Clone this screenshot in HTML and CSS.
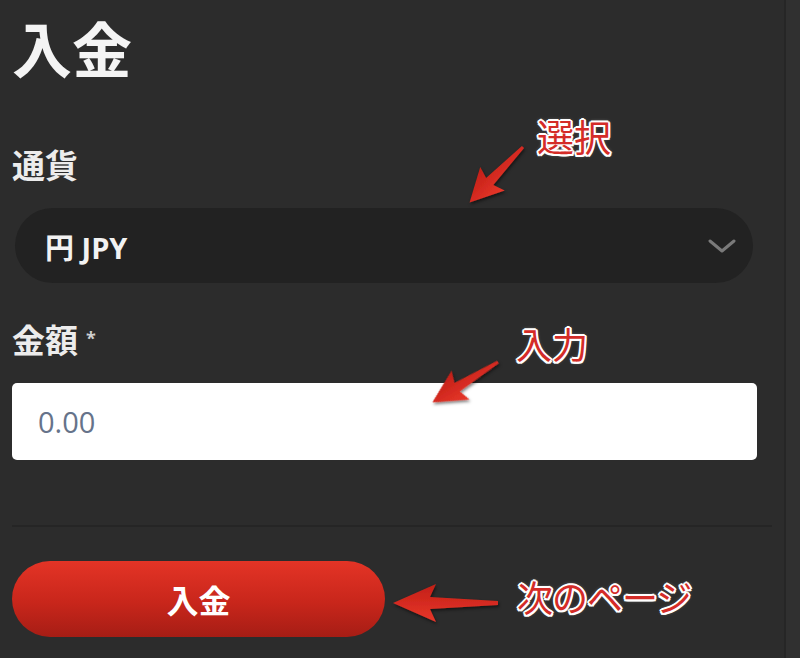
FILE: index.html
```html
<!DOCTYPE html>
<html lang="ja">
<head>
<meta charset="utf-8">
<title>入金</title>
<link rel="stylesheet" href="styles.css">
</head>
<body>
<div class="screen">
  <main class="panel">
    <h1 class="title">入金</h1>
    <div class="label label-currency">通貨</div>
    <div class="select">
      <span class="select-value">円 JPY</span>
      <svg class="chevron" width="28" height="14" viewBox="0 0 28 14"><polyline points="2,2 14,12 26,2" fill="none" stroke="#7a7a7a" stroke-width="3" stroke-linecap="round" stroke-linejoin="round"/></svg>
    </div>
    <div class="label label-amount">金額<span class="req">*</span></div>
    <div class="input"><span class="placeholder">0.00</span></div>
    <div class="divider"></div>
    <button class="submit">入金</button>
  </main>
  <aside class="edge"></aside>

  <div class="note note-select">選択</div>
  <div class="note note-input">入力</div>
  <div class="note note-next">次のページ</div>

  <svg class="arrows" width="800" height="658" viewBox="0 0 800 658">
    <defs>
      <linearGradient id="ag" x1="0" y1="0" x2="0" y2="1">
        <stop offset="0" stop-color="#e8372a"/>
        <stop offset="1" stop-color="#c21f17"/>
      </linearGradient>
      <filter id="sh" x="-20%" y="-50%" width="140%" height="200%">
        <feDropShadow dx="1" dy="2" stdDeviation="1.5" flood-color="#000" flood-opacity="0.5"/>
      </filter>
    </defs>
    <g filter="url(#sh)" fill="url(#ag)">
      <polygon transform="translate(523,147) rotate(133.9)" points="0,-1.5 48,-5 44,-17 77,0 44,17 48,5 0,1.5"/>
      <polygon transform="translate(498,362) rotate(148.4)" points="0,-1.5 48,-5 44,-17 77,0 44,17 48,5 0,1.5"/>
      <polygon transform="translate(498,603) rotate(180)" points="0,-2 68,-6 62,-19 105,0 62,19 68,6 0,2"/>
    </g>
  </svg>
</div>
</body>
</html>
```
FILE: styles.css
```css
html, body {
  margin: 0;
  padding: 0;
}
body {
  background: #2c2c2c;
  font-family: "Open Sans", "Noto Sans CJK JP", sans-serif;
  color: #ffffff;
}
.screen {
  position: relative;
  width: 800px;
  height: 658px;
  display: flex;
  overflow: hidden;
}
.panel {
  width: 772px;
  padding: 17px 0 0 12px;
  display: flex;
  flex-direction: column;
  align-items: flex-start;
}
.edge {
  flex: 1;
  background: #303030;
  border-left: 2px solid #262626;
}
.title {
  margin: 0;
  font-family: "Noto Sans CJK JP", sans-serif;
  font-weight: 700;
  font-size: 60px;
  line-height: 60px;
  color: #f4f4f4;
}
.label {
  font-family: "Noto Sans CJK JP", sans-serif;
  font-weight: 700;
  font-size: 33px;
  line-height: 33px;
  color: #ececec;
  display: flex;
  align-items: flex-start;
}
.label-currency {
  margin-top: 71px;
}
.label-amount {
  margin-top: 40px;
}
.req {
  font-family: "Open Sans", sans-serif;
  font-size: 18px;
  line-height: 18px;
  margin-left: 8px;
  margin-top: 6px;
  color: #cfcfcf;
}
.select {
  margin-top: 27px;
  margin-left: 3px;
  width: 738px;
  height: 75px;
  box-sizing: border-box;
  background: #222222;
  border-radius: 38px;
  display: flex;
  align-items: center;
  justify-content: space-between;
  padding: 0 17px 0 30px;
}
.select-value {
  font-weight: 700;
  font-size: 29px;
  color: #f2f2f2;
}
.chevron {
  display: block;
}
.input {
  margin-top: 27px;
  width: 745px;
  height: 77px;
  box-sizing: border-box;
  background: #ffffff;
  border-radius: 5px;
  display: flex;
  align-items: center;
  padding-left: 26px;
}
.placeholder {
  font-family: "Open Sans", sans-serif;
  font-size: 29px;
  color: #66738a;
}
.divider {
  margin-top: 65px;
  width: 760px;
  height: 2px;
  background: #252525;
}
.submit {
  margin-top: 34px;
  width: 373px;
  height: 76px;
  border: none;
  border-radius: 38px;
  background: linear-gradient(to bottom, #e43426 0%, #c8261b 55%, #a61d15 100%);
  color: #ffffff;
  font-family: "Noto Sans CJK JP", sans-serif;
  font-weight: 700;
  font-size: 32px;
  padding: 0;
}
.note {
  position: absolute;
  font-family: "Noto Sans CJK JP", sans-serif;
  font-weight: 400;
  line-height: 1;
  color: #d42c28;
  text-shadow:
    2px 0 0 #fff, -2px 0 0 #fff, 0 2px 0 #fff, 0 -2px 0 #fff,
    1.5px 1.5px 0 #fff, -1.5px 1.5px 0 #fff, 1.5px -1.5px 0 #fff, -1.5px -1.5px 0 #fff,
    0 0 4px rgba(255,255,255,0.6);
}
.note-select {
  left: 537px;
  top: 118px;
  font-size: 37px;
}
.note-input {
  left: 516px;
  top: 325px;
  font-size: 36px;
}
.note-next {
  left: 517px;
  top: 578px;
  font-size: 36px;
  letter-spacing: -1px;
}
.arrows {
  position: absolute;
  left: 0;
  top: 0;
}
```
